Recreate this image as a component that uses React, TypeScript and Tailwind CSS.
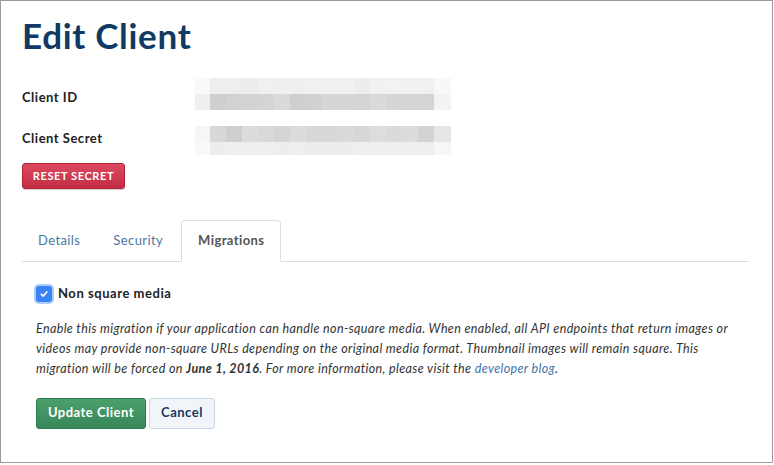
import React from 'react';

const idRows = [
  ['#f8f9f8', '#efefef', '#eeeeee', '#ededed', '#f0f0f0', '#eeefee', '#eef0ee', '#eff0ef', '#f0f0f0', '#f0f0f0', '#ededed', '#f1f1f1', '#f2f2f2', '#f1f1f1', '#f0f0f0', '#f8f8f8'],
  ['#efefef', '#cfcfcf', '#d2d2d2', '#d3d3d3', '#d4d4d4', '#dadada', '#cfcfcf', '#d1d1d1', '#d6d6d6', '#d6d6d6', '#d4d4d4', '#dadada', '#d6d6d6', '#d5d5d5', '#d4d4d4', '#f3f3f3'],
];

const secretRows = [
  ['#f6f6f6', '#d8d8d8', '#cfcfcf', '#dcdcdc', '#d9d9d9', '#d5d5d5', '#dcdcdc', '#d8d8d8', '#d8d8d8', '#dadada', '#d7d7d7', '#dddddd', '#dadada', '#dcdcdc', '#d3d3d3', '#e6e6e6'],
  ['#f9f9f9', '#ededed', '#eeeeee', '#eeeeee', '#efefef', '#ededed', '#eeeeee', '#ededed', '#ededed', '#ededed', '#eeeeee', '#efefef', '#efefef', '#efefef', '#eeeeee', '#f6f6f6'],
];

function Pixelated({ rows, heights }: { rows: string[][]; heights: number[] }) {
  return (
    <div className="flex flex-col">
      {rows.map((row, r) => (
        <div key={r} className="grid grid-cols-[15px_repeat(14,16px)_17px]" style={{ height: heights[r] }}>
          {row.map((c, i) => (
            <div key={i} style={{ backgroundColor: c }} />
          ))}
        </div>
      ))}
    </div>
  );
}

export default function App() {
  return (
    <div className="w-[773px] h-[463px] border border-[#9b9b9b] bg-white font-['Lato',sans-serif] text-[#222]">
      <div className="px-[21px] pt-[13px]">
        <h1 className="text-[35px] font-bold leading-[42px] tracking-[0.7px] text-[#0f3a63]">Edit Client</h1>

        {/* credentials, values are blurred */}
        <div className="mt-[22px] flex items-start">
          <div className="w-[173px]">
            <div className="flex h-[32px] items-center pt-[8px] text-[13px] font-bold tracking-[0.5px]">Client ID</div>
            <div className="mt-[16px] flex h-[29px] items-center pb-[3px] text-[13px] font-bold tracking-[0.5px]">Client Secret</div>
          </div>
          <div>
            <Pixelated rows={idRows} heights={[16, 16]} />
            <div className="h-[16px]" />
            <Pixelated rows={secretRows} heights={[16, 13]} />
          </div>
        </div>

        <button
          type="button"
          className="mt-[8px] h-[26px] w-[103px] rounded-[3px] border border-[#b3233a] bg-gradient-to-b from-[#dc4a60] to-[#c22c43] text-[11px] font-bold uppercase tracking-[0.6px] text-white shadow-[0_1px_1px_rgba(0,0,0,0.2)]"
        >
          Reset Secret
        </button>

        <div className="mt-[31px] mr-[2px] flex items-end border-b border-[#dedede] text-[13px] tracking-[0.4px]">
          <span className="flex h-[41px] items-center px-[16px] text-[#4a77a3]">Details</span>
          <span className="flex h-[41px] items-center px-[17px] text-[#4a77a3]">Security</span>
          <span className="-mb-px ml-[1px] flex h-[42px] items-center rounded-t-[4px] border border-b-white border-[#dedede] bg-white px-[16px] font-bold text-[#555]">
            Migrations
          </span>
        </div>

        <div className="px-[14px]">
          <label className="mt-[22px] flex items-center gap-[6px]">
            <span className="flex h-[16px] w-[16px] items-center justify-center rounded-[3px] bg-[#3b82f6] shadow-[0_0_0_2px_rgba(96,165,250,0.55)]">
              <svg width="10" height="10" viewBox="0 0 10 10" fill="none">
                <path d="M2.2 5.2 L4.2 7.1 L7.9 2.9" stroke="white" strokeWidth="1.6" strokeLinecap="round" strokeLinejoin="round" />
              </svg>
            </span>
            <span className="text-[13px] font-bold tracking-[0.55px] text-[#222]">Non square media</span>
          </label>

          <p className="mt-[15px] text-[12.5px] italic leading-[20px] tracking-[0.37px] whitespace-nowrap text-[#333]">
            Enable this migration if your application can handle non-square media. When enabled, all API endpoints that return images or
            <br />
            videos may provide non-square URLs depending on the original media format. Thumbnail images will remain square. This
            <br />
            migration will be forced on <b>June 1, 2016</b>. For more information, please visit the{' '}
            <span className="text-[#3f74a6]">developer blog</span>.
          </p>

          <div className="mt-[19px] flex gap-[3px]">
            <button
              type="button"
              className="h-[31px] w-[110px] rounded-[3px] border border-[#2f7a4e] bg-gradient-to-b from-[#4aa06c] to-[#38875a] text-[13px] font-bold tracking-[0.5px] text-white"
            >
              Update Client
            </button>
            <button
              type="button"
              className="h-[31px] w-[66px] rounded-[3px] border border-[#c8d6e6] bg-[#f1f4f8] text-[13px] font-bold tracking-[0.5px] text-[#173a5e]"
            >
              Cancel
            </button>
          </div>
        </div>
      </div>
    </div>
  );
}
